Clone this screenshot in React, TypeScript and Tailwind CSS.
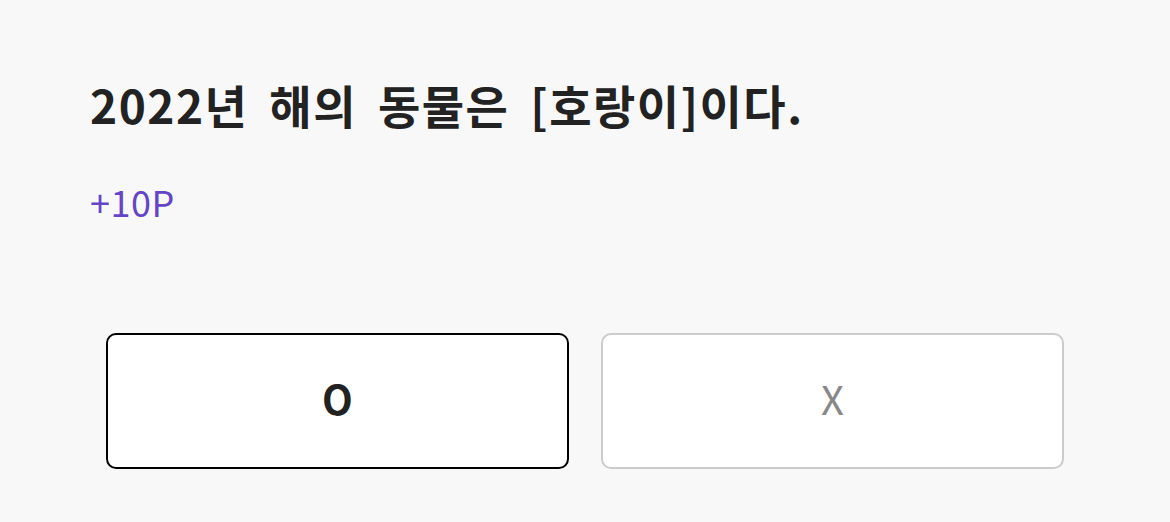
import React from 'react';

export default function App() {
  return (
    <div
      className="w-[1170px] h-[522px] bg-[#f8f8f8] overflow-hidden"
      style={{ fontFamily: '"Noto Sans CJK KR", "Noto Sans", sans-serif' }}
    >
      <div className="pl-[90px] pt-[72px]">
        <h1 className="text-[46px] font-bold text-[#222222] leading-[64px] tracking-[1.5px] [word-spacing:9px]">
          2022년 해의 동물은 [호랑이]이다.
        </h1>
        <p className="mt-[40px] text-[36px] text-[#6445c6] leading-[50px] tracking-[0.5px]">+10P</p>
      </div>
      <div className="mt-[107px] px-[106px] grid grid-cols-2 gap-[32px]">
        <button className="h-[136px] pb-[6px] rounded-[10px] border-[2.5px] border-black bg-white text-[40px] font-bold text-[#222222]">
          O
        </button>
        <button className="h-[136px] pb-[6px] rounded-[10px] border-2 border-[#cccccc] bg-white text-[40px] font-normal text-[#888888]">
          X
        </button>
      </div>
    </div>
  );
}
